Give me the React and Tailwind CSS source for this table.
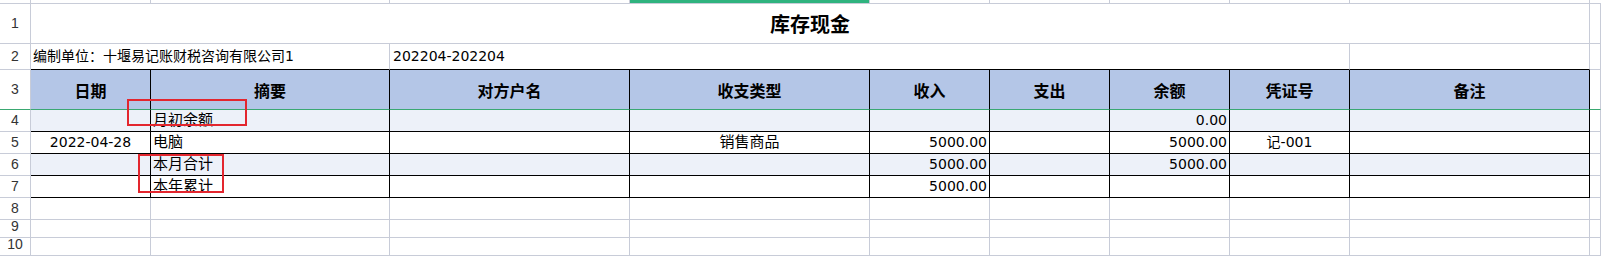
// 库存现金 — 电子表格截图复刻
const FONT = "font-['DejaVu_Sans','Noto_Sans_CJK_SC',sans-serif]";
const COLS = "grid grid-cols-[31px_120px_239px_240px_240px_120px_120px_120px_120px_240px_1fr]";

const HEADERS = ["日期", "摘要", "对方户名", "收支类型", "收入", "支出", "余额", "凭证号", "备注"];

// 每行 9 列：日期、摘要、对方户名、收支类型、收入、支出、余额、凭证号、备注
const FILAS = [
  { n: 4, sombra: true, c: ["", "月初余额", "", "", "", "", "0.00", "", ""] },
  { n: 5, sombra: false, c: ["2022-04-28", "电脑", "", "销售商品", "5000.00", "", "5000.00", "记-001", ""] },
  { n: 6, sombra: true, c: ["", "本月合计", "", "", "5000.00", "", "5000.00", "", ""] },
  { n: 7, sombra: false, c: ["", "本年累计", "", "", "5000.00", "", "", "", ""] },
];

// alineación por columna
const ALINEA = ["center", "left", "left", "center", "right", "right", "right", "center", "left"];

function NumFila({ n, verde }) {
  return (
    <div
      className={
        "flex items-center justify-center border-r border-b border-r-[#c8ccd8] font-['Liberation_Sans',sans-serif] text-[14px] text-[#333] " +
        (verde ? "border-b-[#3aa872]" : "border-b-[#c8ccd8]")
      }
    >
      {n}
    </div>
  );
}

function Celda({ texto, alinea, sombra }) {
  const esNum = alinea === "right" || /^[0-9]/.test(texto) || texto.startsWith("记");
  let pos = "justify-start pl-[2px]";
  if (alinea === "center") pos = "justify-center";
  if (alinea === "right") pos = "justify-end pr-[2px]";
  return (
    <div
      className={
        "flex items-center overflow-hidden whitespace-nowrap border-r border-b border-black text-black " +
        pos + " " +
        (esNum ? "text-[14px] " : "text-[15px] ") +
        (sombra ? "bg-[#edf1f9]" : "bg-white")
      }
    >
      {texto}
    </div>
  );
}

function Vacia({ verde }) {
  return (
    <div
      className={
        "border-r border-b border-r-[#c8ccd8] " + (verde ? "border-b-[#3aa872]" : "border-b-[#c8ccd8]")
      }
    />
  );
}

export default function App() {
  return (
    <div className={"relative h-[256px] w-[1601px] overflow-hidden bg-white " + FONT}>
      {/* franja de cabeceras de columna (sólo se ve el borde inferior) */}
      <div className={COLS + " h-[4px]"}>
        <div className="border-r border-b border-[#c8ccd8]" />
        <div className="border-r border-b border-[#c8ccd8]" />
        <div className="border-r border-b border-[#c8ccd8]" />
        <div className="border-r border-b border-[#c8ccd8]" />
        <div className="border-b border-r border-r-[#c8ccd8] border-b-[#c8ccd8] bg-[#2fb37e]" />
        <div className="border-r border-b border-[#c8ccd8]" />
        <div className="border-r border-b border-[#c8ccd8]" />
        <div className="border-r border-b border-[#c8ccd8]" />
        <div className="border-r border-b border-[#c8ccd8]" />
        <div className="border-r border-b border-[#c8ccd8]" />
        <div className="border-b border-[#c8ccd8]" />
      </div>

      {/* fila 1: título */}
      <div className={COLS + " h-[40px]"}>
        <NumFila n={1} />
        <div className="col-span-9 flex items-center justify-center border-r border-b border-[#c8ccd8] font-['Noto_Sans_CJK_SC',sans-serif] text-[20px] font-bold text-black">
          库存现金
        </div>
        <Vacia />
      </div>

      {/* fila 2: unidad y periodo */}
      <div className={COLS + " h-[26px]"}>
        <NumFila n={2} />
        <div className="col-span-2 flex items-center whitespace-nowrap border-r border-b border-r-[#c8ccd8] border-b-black pl-[2px] text-[14px] text-black">
          编制单位：十堰易记账财税咨询有限公司1
        </div>
        <div className="col-span-6 flex items-center border-r border-b border-r-[#c8ccd8] border-b-black pl-[3px] text-[14px] text-black">
          202204-202204
        </div>
        <div className="border-r border-b border-r-[#c8ccd8] border-b-black" />
        <Vacia />
      </div>

      {/* fila 3: cabecera de la tabla */}
      <div className={COLS + " h-[40px]"}>
        <NumFila n={3} verde />
        {HEADERS.map((h) => (
          <div
            key={h}
            className="flex items-center justify-center border-r border-b border-r-black border-b-[#3aa872] bg-[#b4c6e7] font-['Noto_Sans_CJK_SC',sans-serif] text-[16px] font-bold text-black"
          >
            {h}
          </div>
        ))}
        <Vacia verde />
      </div>

      {/* filas de datos */}
      {FILAS.map((f) => (
        <div key={f.n} className={COLS + " h-[22px]"}>
          <NumFila n={f.n} />
          {f.c.map((t, i) => (
            <Celda key={i} texto={t} alinea={ALINEA[i]} sombra={f.sombra} />
          ))}
          <Vacia />
        </div>
      ))}

      {/* filas vacías */}
      {[8, 9, 10].map((n) => (
        <div key={n} className={COLS + " h-[18px]"}>
          <NumFila n={n} />
          {Array.from({ length: 10 }).map((_, i) => (
            <Vacia key={i} />
          ))}
        </div>
      ))}
      <div className={COLS + " h-[18px]"}>
        <div className="border-r border-r-[#c8ccd8]" />
        {Array.from({ length: 10 }).map((_, i) => (
          <div key={i} className="border-r border-r-[#c8ccd8]" />
        ))}
      </div>

      {/* marcas rojas de anotación */}
      <div className="absolute left-[127px] top-[99px] h-[27px] w-[120px] border-2 border-[#e3262e]" />
      <div className="absolute left-[138px] top-[154px] h-[39px] w-[86px] border-2 border-[#e3262e]" />
    </div>
  );
}
